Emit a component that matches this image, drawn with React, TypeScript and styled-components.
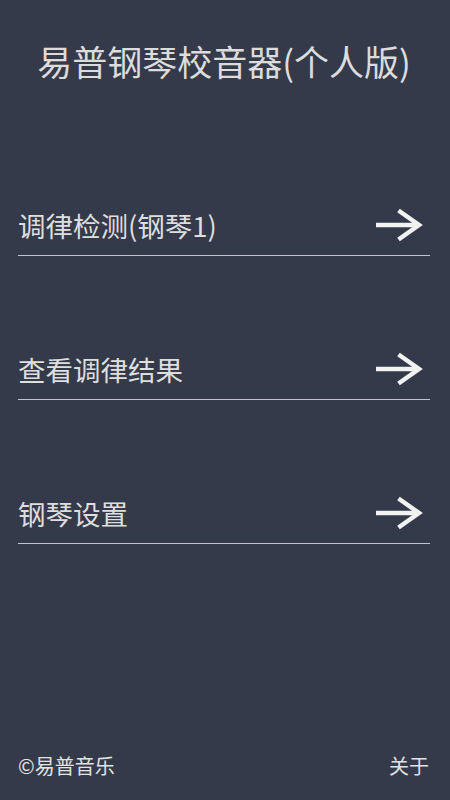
import styled, { createGlobalStyle } from "styled-components";

const GlobalStyle = createGlobalStyle`
  html, body {
    margin: 0;
    padding: 0;
    background: #353a4a;
  }
  * {
    box-sizing: border-box;
  }
`;

const menuItems = ["调律检测(钢琴1)", "查看调律结果", "钢琴设置"];

const Arrow = () => (
  <svg width="48" height="38" viewBox="0 0 48 38" fill="none">
    <path d="M1 19H42" stroke="#f2f2f2" strokeWidth="4.5" />
    <path
      d="M23.5 4.5L44 19L23.5 33.5"
      stroke="#f2f2f2"
      strokeWidth="4.5"
      strokeLinejoin="miter"
    />
  </svg>
);

const App = () => {
  return (
    <>
      <GlobalStyle />
      <Page>
        <Title>易普钢琴校音器(个人版)</Title>
        <Menu>
          {menuItems.map((label) => (
            <Row key={label}>
              <RowInner>
                <Label>{label}</Label>
                <ArrowBox>
                  <Arrow />
                </ArrowBox>
              </RowInner>
            </Row>
          ))}
        </Menu>
        <Footer>
          <FooterText>©易普音乐</FooterText>
          <FooterText>关于</FooterText>
        </Footer>
      </Page>
    </>
  );
};

const Page = styled.div`
  display: flex;
  flex-direction: column;
  height: 100vh;
  padding: 0 20px 0 18px;
  background: #353a4a;
  font-family: "Noto Sans CJK SC", "Noto Sans", sans-serif;
`;

const Title = styled.h1`
  margin: 41px 0 0;
  height: 40px;
  line-height: 40px;
  font-size: 35px;
  font-weight: 400;
  color: #dcdcdc;
  text-align: center;
  white-space: nowrap;
`;

const Menu = styled.div`
  display: flex;
  flex-direction: column;
  margin-top: 31px;
`;

const Row = styled.div`
  display: flex;
  align-items: flex-end;
  height: 144px;
  border-bottom: 1px solid #c2c4c8;
  padding-bottom: 10px;
`;

const RowInner = styled.div`
  display: flex;
  align-items: center;
  justify-content: space-between;
  width: 100%;
  height: 40px;
  padding-right: 7px;
`;

const Label = styled.span`
  font-size: 27.5px;
  line-height: 40px;
  color: #dedede;
`;

const ArrowBox = styled.span`
  display: flex;
  width: 48px;
  height: 38px;
`;

const Footer = styled.div`
  display: flex;
  justify-content: space-between;
  align-items: center;
  margin-top: auto;
  padding-bottom: 22px;
  padding-right: 1px;
`;

const FooterText = styled.span`
  font-size: 20px;
  line-height: 24px;
  color: #e2e2e2;
`;

export default App;
